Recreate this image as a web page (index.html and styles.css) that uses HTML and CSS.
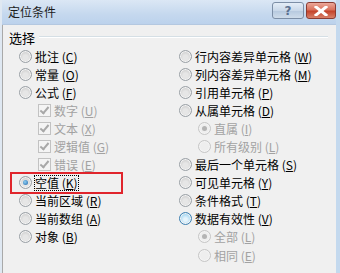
FILE: index.html
```html
<!DOCTYPE html>
<html>
<head>
<meta charset="utf-8">
<link rel="stylesheet" href="styles.css">
</head>
<body>
<div class="window">
  <div class="titlebar">
    <span class="title">定位条件</span>
    <div class="btns">
      <div class="btn help">?</div>
      <div class="btn close">
        <svg width="14" height="10" viewBox="0 0 14 10"><path d="M2 1 L12 9 M12 1 L2 9" stroke="#fff" stroke-width="3" stroke-linecap="square"/></svg>
      </div>
    </div>
  </div>
  <div class="body">
    <div class="group-head"><span>选择</span><i class="rule"></i></div>
    <div class="cols">
      <div class="col">
        <div class="row"><i class="radio"></i><span>批注 (<u>C</u>)</span></div>
        <div class="row"><i class="radio"></i><span>常量 (<u>O</u>)</span></div>
        <div class="row"><i class="radio"></i><span>公式 (<u>F</u>)</span></div>
        <div class="row sub dis"><i class="check"></i><span>数字 (<u>U</u>)</span></div>
        <div class="row sub dis"><i class="check"></i><span>文本 (<u>X</u>)</span></div>
        <div class="row sub dis"><i class="check"></i><span>逻辑值 (<u>G</u>)</span></div>
        <div class="row sub dis"><i class="check"></i><span>错误 (<u>E</u>)</span></div>
        <div class="row hl"><i class="radio on"></i><span class="focus">空值 (<u>K</u>)</span></div>
        <div class="row"><i class="radio"></i><span>当前区域 (<u>R</u>)</span></div>
        <div class="row"><i class="radio"></i><span>当前数组 (<u>A</u>)</span></div>
        <div class="row"><i class="radio"></i><span>对象 (<u>B</u>)</span></div>
      </div>
      <div class="col">
        <div class="row"><i class="radio"></i><span>行内容差异单元格 (<u>W</u>)</span></div>
        <div class="row"><i class="radio"></i><span>列内容差异单元格 (<u>M</u>)</span></div>
        <div class="row"><i class="radio"></i><span>引用单元格 (<u>P</u>)</span></div>
        <div class="row"><i class="radio"></i><span>从属单元格 (<u>D</u>)</span></div>
        <div class="row sub dis"><i class="radio on"></i><span>直属 (<u>I</u>)</span></div>
        <div class="row sub dis"><i class="radio"></i><span>所有级别 (<u>L</u>)</span></div>
        <div class="row"><i class="radio"></i><span>最后一个单元格 (<u>S</u>)</span></div>
        <div class="row"><i class="radio"></i><span>可见单元格 (<u>Y</u>)</span></div>
        <div class="row"><i class="radio"></i><span>条件格式 (<u>T</u>)</span></div>
        <div class="row"><i class="radio hover"></i><span>数据有效性 (<u>V</u>)</span></div>
        <div class="row sub dis"><i class="radio on"></i><span>全部 (<u>L</u>)</span></div>
        <div class="row sub dis"><i class="radio"></i><span>相同 (<u>E</u>)</span></div>
      </div>
    </div>
  </div>
</div>
</body>
</html>
```

FILE: styles.css
```css
html, body {
  margin: 0;
  padding: 0;
}
body {
  width: 340px;
  height: 273px;
  overflow: hidden;
  background: #f0f0f0;
  font-family: "Noto Sans CJK SC", "Noto Sans", sans-serif;
  font-size: 12px;
  color: #000;
}
.window {
  position: relative;
  width: 340px;
  height: 273px;
  box-sizing: border-box;
  border-right: 4px solid #c4d9ee;
  border-left: 2px solid #dfe8f2;
  background: #f0f0f0;
  display: flex;
  flex-direction: column;
}
.titlebar {
  height: 24px;
  flex: none;
  background: linear-gradient(#dbe7f5, #c5d8ee 60%, #bcd2ec);
  display: flex;
  align-items: center;
  justify-content: space-between;
  padding-left: 6px;
  border-bottom: 1px solid #b4c8e0;
}
.title {
  font-size: 12px;
  color: #1c1c1c;
  line-height: 1;
}
.btns {
  display: flex;
  gap: 2px;
  align-self: flex-start;
  margin-top: 2px;
}
.btn {
  height: 17px;
  box-sizing: border-box;
  border: 1px solid #7c8ea6;
  border-radius: 3px;
  display: flex;
  align-items: center;
  justify-content: center;
}
.help {
  width: 32px;
  background: linear-gradient(#e4edf7, #c9d8e9 50%, #b5c8de 51%, #cfdcea);
  color: #5a6f8e;
  font-family: "DejaVu Sans", sans-serif;
  font-weight: bold;
  font-size: 12px;
}
.close {
  width: 30px;
  border-color: #8a3b32;
  background: linear-gradient(#eba89a, #d9715c 45%, #c4442c 55%, #d8816a);
}
.body {
  flex: 1;
  position: relative;
  border-left: 1px solid #a9a9a9;
}
.group-head {
  display: flex;
  align-items: center;
  height: 22px;
  padding-left: 6px;
  margin-top: 1px;
  margin-right: 8px;
}
.group-head span {
  font-size: 13px;
  padding-right: 4px;
}
.rule {
  flex: 1;
  height: 0;
  border-top: 1px solid #d5dfe5;
  border-bottom: 1px solid #fff;
}
.cols {
  display: flex;
  margin-top: -1px;
  padding-left: 16px;
}
.col {
  display: flex;
  flex-direction: column;
}
.col:first-child {
  width: 160px;
}
.row {
  height: 18.1px;
  display: flex;
  align-items: center;
  gap: 3px;
  white-space: nowrap;
}
.row.sub {
  padding-left: 19px;
}
.dis {
  color: #a2a2a2;
}
.row u {
  text-decoration: underline;
}
.radio {
  width: 11px;
  height: 11px;
  flex: none;
  border-radius: 50%;
  border: 1px solid #9aa0a6;
  background: radial-gradient(circle at 50% 60%, #e6e6e6 30%, #cfcfcf 70%);
  box-shadow: inset 0 0 0 1px #f4f4f4;
  position: relative;
}
.dis .radio {
  border-color: #c6c6c6;
  background: #eeeeee;
}
.radio.on::after {
  content: "";
  position: absolute;
  left: 3px;
  top: 3px;
  width: 5px;
  height: 5px;
  border-radius: 50%;
  background: radial-gradient(circle at 40% 40%, #8ed0f4, #1f63a8);
}
.dis .radio.on::after {
  background: #b4b4b4;
}
.radio.hover {
  border-color: #3c7fb1;
  background: radial-gradient(circle at 50% 60%, #e6f4fc 20%, #8fcdef 80%);
}
.check {
  width: 11px;
  height: 11px;
  flex: none;
  border: 1px solid #c2c2c2;
  background: #f4f4f4;
  position: relative;
}
.check::after {
  content: "";
  position: absolute;
  left: 3px;
  top: 0px;
  width: 3px;
  height: 7px;
  border-right: 2px solid #a8a8a8;
  border-bottom: 2px solid #a8a8a8;
  transform: rotate(40deg);
}
.row.hl {
  position: relative;
}
.row.hl::before {
  content: "";
  position: absolute;
  left: -9px;
  top: -2px;
  width: 109px;
  height: 18px;
  border: 2px solid #e0252c;
}
.focus {
  outline: 1px dotted #000;
  outline-offset: 0;
  line-height: 14px;
}
```
